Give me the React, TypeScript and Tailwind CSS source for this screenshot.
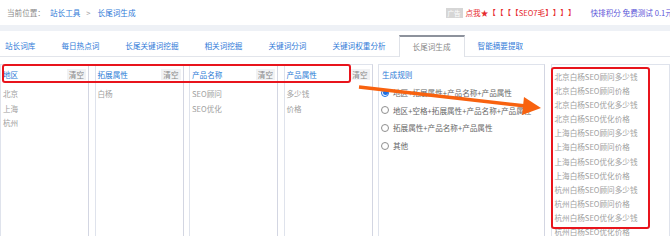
import React from "react";

const tabs = ["站长词库", "每日热点词", "长尾关键词挖掘", "相关词挖掘", "关键词分词", "关键词权重分析", "长尾词生成", "智能摘要提取"];

const results = [
  "北京白杨SEO顾问多少钱",
  "北京白杨SEO顾问价格",
  "北京白杨SEO优化多少钱",
  "北京白杨SEO优化价格",
  "上海白杨SEO顾问多少钱",
  "上海白杨SEO顾问价格",
  "上海白杨SEO优化多少钱",
  "上海白杨SEO优化价格",
  "杭州白杨SEO顾问多少钱",
  "杭州白杨SEO顾问价格",
  "杭州白杨SEO优化多少钱",
  "杭州白杨SEO优化价格",
];

const rules = ["地区+拓展属性+产品名称+产品属性", "地区+空格+拓展属性+产品名称+产品属性", "拓展属性+产品名称+产品属性", "其他"];

function Col({ title, items }: { title: string; items: string[] }) {
  return (
    <div className="w-[89px] shrink-0 h-full border border-[#dfe3ec] border-r-[#d3d6e2] bg-white flex flex-col">
      <div className="h-[19px] flex items-center justify-between pl-[2px] pr-[2px]">
        <span className="text-[#2b7ad6]">{title}</span>
        <span className="bg-[#f1f2f4] text-[#888] px-[2px] h-[11px] leading-[11px]">清空</span>
      </div>
      <div className="pt-[3px] pl-[2px] leading-[14.5px] text-[#a0a0a0]">
        {items.map((t) => (
          <div key={t}>{t}</div>
        ))}
      </div>
    </div>
  );
}

function B({ c }: { c: string }) {
  return <span className="inline-block w-[7.6px] text-center">{c}</span>;
}

export default function App() {
  return (
    <div
      className="relative w-[670px] h-[236px] overflow-hidden bg-white text-[7.6px]"
      style={{ fontFamily: '"Noto Sans CJK SC", "Noto Sans", sans-serif' }}
    >
      {/* top bar */}
      <div className="h-[25px] flex items-center whitespace-nowrap">
        <span className="ml-[7px] text-[#8a8a8a]">当前位置：</span>
        <span className="ml-[5px] text-[#2f7ad8]">站长工具</span>
        <span className="ml-[6px] text-[#999]">&gt;</span>
        <span className="ml-[7px] text-[#2f7ad8]">长尾词生成</span>
        <span className="ml-[310px] bg-[#d6d6d6] text-white text-[6.5px] px-[2px] h-[10px] leading-[10px]">广告</span>
        <span className="ml-[3px] text-[#e62a2e] flex items-center">
          <span>点我★</span>
          <B c="【" />
          <B c="【" />
          <B c="【" />
          <B c="【" />
          <span>SEO7毛</span>
          <B c="】" />
          <B c="】" />
          <B c="】" />
          <B c="】" />
        </span>
        <span className="ml-[15px] text-[#5a55d8]">快排积分 免费测试 0.1元</span>
      </div>
      <div className="h-[6px] bg-[#eef1f6]" />
      {/* tabs */}
      <div className="h-[26px] flex items-end border-b border-[#e2e5eb] whitespace-nowrap">
        {tabs.map((t, i) =>
          i === 6 ? (
            <div
              key={t}
              className="h-[22px] -mb-px px-[13px] flex items-center bg-white border-t-2 border-t-[#8d929c] border-x border-x-[#dfe2e8] text-[#888]"
            >
              {t}
            </div>
          ) : (
            <div
              key={t}
              className={`h-[21px] flex items-center text-[#2f7ad8] ${i === 0 ? "pl-[5px] pr-[13px]" : "px-[13px]"}`}
            >
              {t}
            </div>
          )
        )}
      </div>
      {/* columns */}
      <div className="mt-[7px] h-[200px] flex gap-[5.5px] whitespace-nowrap">
        <Col title="地区" items={["北京", "上海", "杭州"]} />
        <Col title="拓展属性" items={["白杨"]} />
        <Col title="产品名称" items={["SEO顾问", "SEO优化"]} />
        <Col title="产品属性" items={["多少钱", "价格"]} />
        <div className="w-[167px] shrink-0 h-full border border-[#dfe3ec] border-r-[#d3d6e2] flex flex-col">
          <div className="h-[19px] flex items-center pl-[3px] text-[#2b7ad6]">生成规则</div>
          {rules.map((r, i) => (
            <div key={r} className="h-[17.6px] flex items-center pl-[2px] gap-[4px] text-[#666]">
              {i === 0 ? (
                <span className="w-[8px] h-[8px] rounded-full border border-[#1d6fe3] flex items-center justify-center">
                  <span className="w-[5px] h-[5px] rounded-full bg-[#1d6fe3]" />
                </span>
              ) : (
                <span className="w-[8px] h-[8px] rounded-full border border-[#8f8f8f] bg-white" />
              )}
              <span>{r}</span>
            </div>
          ))}
        </div>
        <div className="flex-1 h-full border border-[#dfe3ec] pl-[3px] pt-[5px] leading-[14.1px] text-[#a0a0a0]">
          {results.map((r) => (
            <div key={r}>{r}</div>
          ))}
        </div>
      </div>

      {/* red highlight boxes */}
      <div className="absolute left-[2px] top-[64px] w-[349px] h-[19px] border-2 border-[#e8141c] rounded-[3px]" />
      <div className="absolute left-[551px] top-[67px] w-[99px] h-[162px] border-2 border-[#e8141c] rounded-[3px]" />

      {/* orange arrow */}
      <svg className="absolute left-0 top-0" width="670" height="236" viewBox="0 0 670 236">
        <line x1="359" y1="87" x2="526" y2="106" stroke="#f8620f" strokeWidth="3.5" />
        <polygon points="541,108 524,97 522,115" fill="#f8620f" />
      </svg>
    </div>
  );
}
